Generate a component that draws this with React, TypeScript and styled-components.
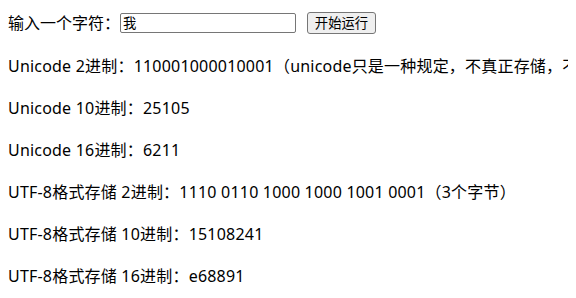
import React, { useState } from "react";
import styled, { createGlobalStyle } from "styled-components";

const Global = createGlobalStyle`
  html {
    overflow: hidden;
  }
  body {
    margin: 8px;
    background: #ffffff;
    color: #000000;
    font-family: "Noto Sans", "Noto Sans CJK SC", sans-serif;
    font-size: 16px;
  }
`;

const Page = styled.div`
  display: block;
  white-space: nowrap;
  overflow: hidden;
  margin-right: -8px;
`;

const InputRow = styled.div`
  display: flex;
  align-items: center;
  height: 29px;
`;

const Label = styled.span`
  font-size: 16px;
  line-height: 20px;
`;

const CharInput = styled.input`
  box-sizing: border-box;
  width: 176px;
  height: 20px;
  margin: 0;
  padding: 0 2px;
  border: 1px solid #767676;
  border-radius: 2px;
  font-family: "Noto Sans CJK SC", sans-serif;
  font-size: 13.33px;
  color: #000;
  background: #fff;
  outline: none;
`;

const RunButton = styled.button`
  box-sizing: border-box;
  width: 69px;
  height: 22px;
  margin: 0 0 0 11px;
  padding: 0 6px;
  border: 1px solid #767676;
  border-radius: 3px;
  background: #efefef;
  color: #000;
  font-family: "Noto Sans CJK SC", sans-serif;
  font-size: 13.33px;
  line-height: 18px;
`;

const Line = styled.p`
  margin: 16px 0 0 0;
  line-height: 26px;
  font-size: 16px;
  letter-spacing: 0.2px;
`;

export default function App() {
  const [ch, setCh] = useState("我");
  return (
    <Page>
      <Global />
      <InputRow>
        <Label>输入一个字符：</Label>
        <CharInput value={ch} onChange={(e) => setCh(e.target.value)} />
        <RunButton>开始运行</RunButton>
      </InputRow>
      <Line>Unicode 2进制：110001000010001（unicode只是一种规定，不真正存储，不同编码方式存储的结果不同）</Line>
      <Line>Unicode 10进制：25105</Line>
      <Line>Unicode 16进制：6211</Line>
      <Line>UTF-8格式存储 2进制：1110 0110 1000 1000 1001 0001（3个字节）</Line>
      <Line>UTF-8格式存储 10进制：15108241</Line>
      <Line>UTF-8格式存储 16进制：e68891</Line>
    </Page>
  );
}
